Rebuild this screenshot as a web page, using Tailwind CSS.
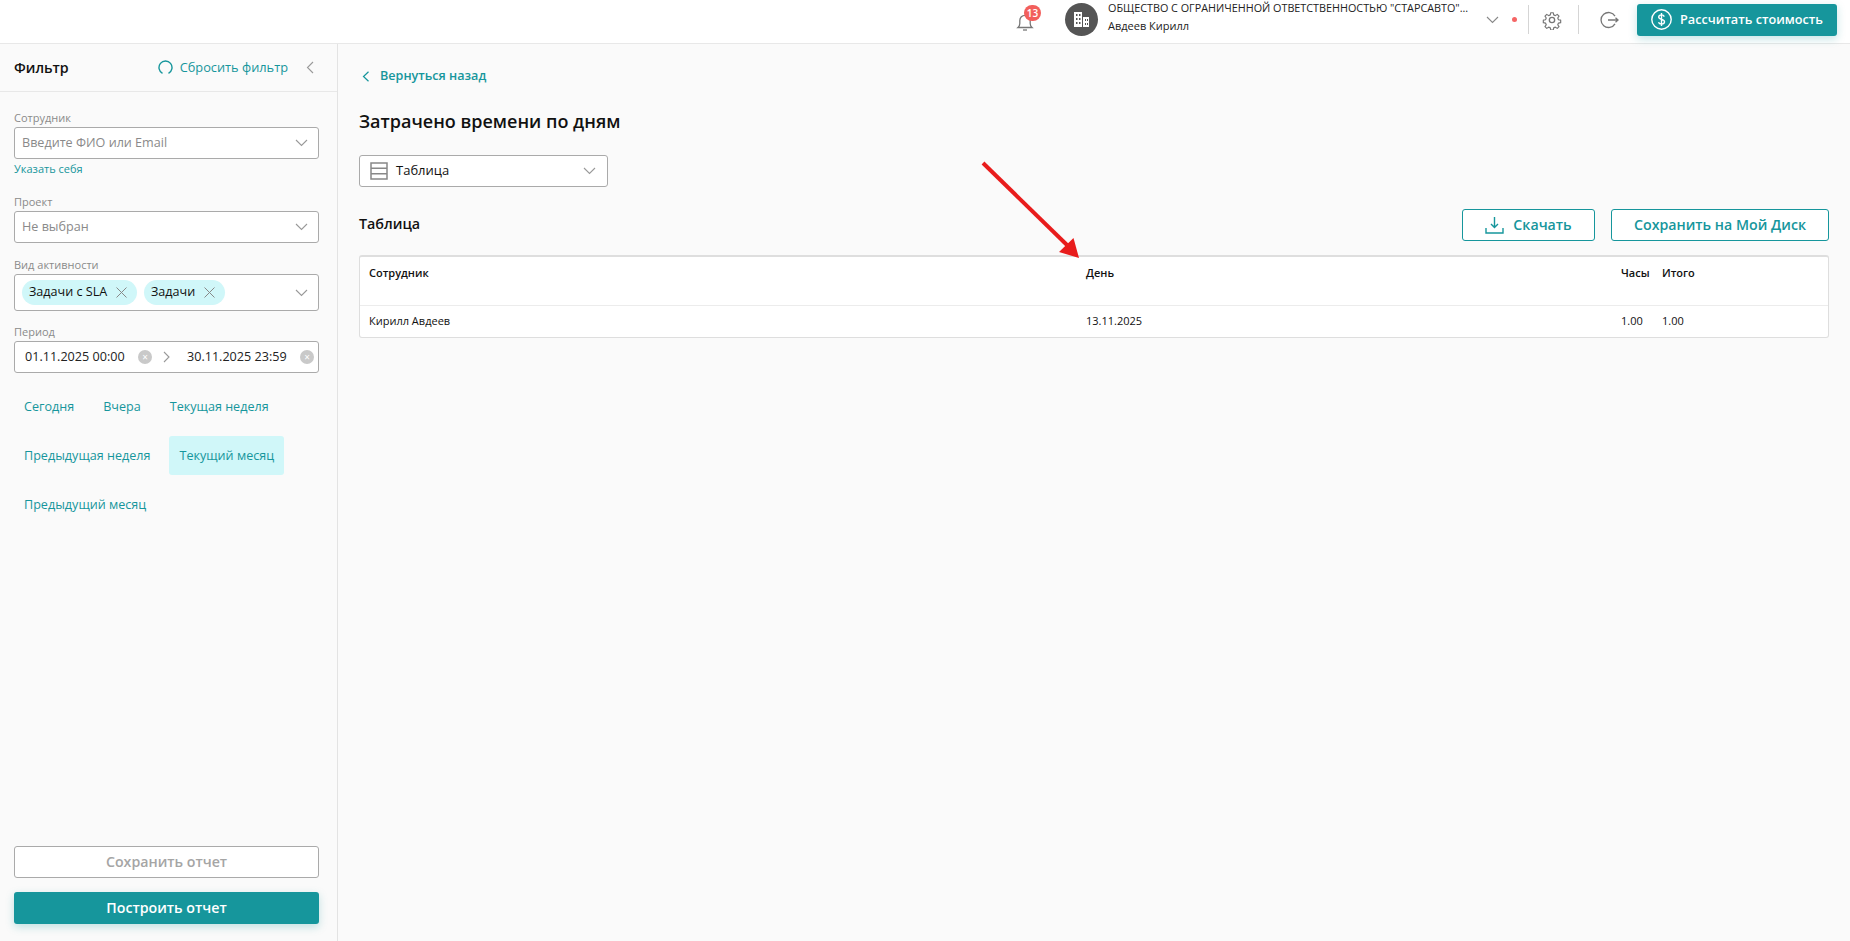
<!DOCTYPE html>
<html lang="ru">
<head>
  <meta charset="UTF-8" />
  <title>Затрачено времени по дням</title>
  <script src="https://cdn.jsdelivr.net/npm/@tailwindcss/browser@4"></script>
</head>
<body class="h-[941px] w-[1850px] overflow-hidden bg-[#fafafa] font-['Open_Sans',sans-serif] text-[12.6px] text-[#111]">
  <!-- Header -->
  <header class="flex h-[44px] items-center border-b border-[#e8e8e8] bg-white pb-[4px] pr-[13px]">
    <div class="relative ml-[1016px] h-[24px] w-[18px] shrink-0">
      <svg class="absolute left-0 top-[4px]" width="18" height="20" viewBox="0 0 18 20" fill="none" stroke="#777" stroke-width="1.3"><path d="M2 15.5c1.2-1 1.8-2 1.8-4V8.5a5.2 5.2 0 0 1 10.4 0v3c0 2 .6 3 1.8 4z"/><path d="M7 18h4"/></svg>
      <span class="absolute left-[8px] top-[-3px] flex h-[16px] w-[17px] items-center justify-center rounded-full bg-[#f25f5c] text-[10px] font-semibold leading-none text-white">13</span>
    </div>
    <div class="ml-[31px] flex h-[33px] w-[33px] shrink-0 items-center justify-center rounded-full bg-[#555]">
      <svg width="17" height="17" viewBox="0 0 17 17" fill="#fff"><path d="M1 1h8v15H1zM10 6h6v10h-6z"/><path fill="#555" d="M3 3h1.500v2H3zM6 3h1.500v2H6zM3 7h1.500v2H3zM6 7h1.500v2H6zM3 11h1.500v2H3zM6 11h1.500v2H6zM12 8h1v2h-1zM14 8h1v2h-1zM12 12h1v2h-1zM14 12h1v2h-1z"/></svg>
    </div>
    <div class="mb-[6px] ml-[10px] w-[368px] shrink-0 text-[11px] leading-[18px] text-[#222]">
      <div class="truncate whitespace-nowrap text-[10.800px]">ОБЩЕСТВО С ОГРАНИЧЕННОЙ ОТВЕТСТВЕННОСТЬЮ "СТАРСАВТО"...</div>
      <div>Авдеев Кирилл</div>
    </div>
    <svg class="ml-[10px] shrink-0" width="13" height="8" viewBox="0 0 13 8" fill="none" stroke="#888" stroke-width="1.100"><path d="M1 1l5.500 5.500L12 1"/></svg>
    <span class="ml-[13px] h-[5px] w-[5px] shrink-0 rounded-full bg-[#f56565]"></span>
    <span class="ml-[11px] h-[29px] w-px shrink-0 bg-[#d5d5d5]"></span>
    <svg class="ml-[13px] shrink-0" width="20" height="20" viewBox="0 0 24 24" fill="none" stroke="#777" stroke-width="1.600" stroke-linejoin="round"><circle cx="12" cy="12" r="3.200"/><path d="M10.300 2h3.400l.6 3 2.300 1 2.600-1.700 2.400 2.400-1.700 2.600 1 2.300 3 .6v3.400l-3 .6-1 2.300 1.700 2.600-2.400 2.400-2.600-1.700-2.300 1-.6 3h-3.400l-.6-3-2.300-1-2.600 1.700-2.400-2.400 1.700-2.600-1-2.300-3-.6v-3.400l3-.6 1-2.300-1.700-2.600 2.400-2.400 2.600 1.700 2.300-1z" transform="translate(1.500 1.500) scale(.875)"/></svg>
    <span class="ml-[16px] h-[29px] w-px shrink-0 bg-[#d5d5d5]"></span>
    <svg class="ml-[21px] shrink-0" width="19" height="18" viewBox="0 0 19 18" fill="none" stroke="#777" stroke-width="1.300"><path d="M15 5.200A7.500 7.500 0 1 0 15 12.800"/><path d="M8 9h10M15.500 6.800L18 9l-2.500 2.200" /></svg>
    <button class="ml-[18px] flex h-[32px] w-[200px] shrink-0 items-center rounded-[3px] bg-[#16969c] pl-[14px] text-[12.700px] font-semibold text-white shadow-[0_3px_8px_rgba(22,150,156,0.25)]">
      <svg width="21" height="21" viewBox="0 0 21 21" fill="none" stroke="#fff" stroke-width="1.400"><circle cx="10.500" cy="10.500" r="9.700"/><path d="M13.300 7.600c-.5-1.100-1.500-1.700-2.800-1.700-1.600 0-2.800.9-2.800 2.200 0 3 5.800 1.600 5.800 4.700 0 1.400-1.300 2.300-3 2.300-1.400 0-2.600-.7-3-1.900M10.500 4v13"/></svg>
      <span class="ml-[8px] whitespace-nowrap">Рассчитать стоимость</span>
    </button>
  </header>

  <div class="flex h-[897px]">
    <!-- Filter sidebar -->
    <aside class="flex w-[338px] shrink-0 flex-col border-r border-[#e3e3e3] bg-[#fafafa]">
      <div class="flex h-[48px] shrink-0 items-center border-b border-[#e8e8e8] pl-[14px] pr-[23px]">
        <span class="text-[14.200px] font-semibold">Фильтр</span>
        <svg class="ml-auto" width="15" height="15" viewBox="0 0 15 15" fill="none" stroke="#16969c" stroke-width="1.400"><path d="M4.500 13.300A6.500 6.500 0 1 1 10.500 13.300"/></svg>
        <span class="ml-[7px] whitespace-nowrap text-[12.800px] text-[#16969c]">Сбросить фильтр</span>
        <svg class="ml-[18px]" width="8" height="13" viewBox="0 0 8 13" fill="none" stroke="#999" stroke-width="1.100"><path d="M7 1L1.500 6.500 7 12"/></svg>
      </div>

      <div class="flex flex-1 flex-col pl-[14px] pr-[18px]">
        <div class="mt-[17px] text-[11px] leading-[18px] text-[#8a8a8a]">Сотрудник</div>
        <div class="flex h-[32px] items-center justify-between rounded-[3px] border border-[#aaa] bg-white pl-[7px] pr-[10px] text-[#8a8a8a]">
          Введите ФИО или Email
          <svg width="13" height="8" viewBox="0 0 13 8" fill="none" stroke="#999" stroke-width="1.100"><path d="M1 1l5.500 5.500L12 1"/></svg>
        </div>
        <div class="mt-[2px] text-[11px] leading-[16px] text-[#16969c]">Указать себя</div>

        <div class="mt-[16px] text-[11px] leading-[18px] text-[#8a8a8a]">Проект</div>
        <div class="flex h-[32px] items-center justify-between rounded-[3px] border border-[#aaa] bg-white pl-[7px] pr-[10px] text-[#8a8a8a]">
          Не выбран
          <svg width="13" height="8" viewBox="0 0 13 8" fill="none" stroke="#999" stroke-width="1.100"><path d="M1 1l5.500 5.500L12 1"/></svg>
        </div>

        <div class="mt-[13px] text-[11px] leading-[18px] text-[#8a8a8a]">Вид активности</div>
        <div class="flex h-[37px] items-center rounded-[3px] border border-[#aaa] bg-white pl-[7px] pr-[10px]">
          <span class="flex h-[25px] w-[115px] shrink-0 items-center justify-between rounded-full bg-[#d0f7f9] pl-[7px] pr-[10px]">
            Задачи с SLA
            <svg width="11" height="11" viewBox="0 0 11 11" fill="none" stroke="#888"><path d="M.5.500l10 10M10.500.500l-10 10"/></svg>
          </span>
          <span class="ml-[7px] flex h-[25px] w-[81px] shrink-0 items-center justify-between rounded-full bg-[#d0f7f9] pl-[7px] pr-[10px]">
            Задачи
            <svg width="11" height="11" viewBox="0 0 11 11" fill="none" stroke="#888"><path d="M.5.500l10 10M10.500.500l-10 10"/></svg>
          </span>
          <svg class="ml-auto" width="13" height="8" viewBox="0 0 13 8" fill="none" stroke="#999" stroke-width="1.100"><path d="M1 1l5.500 5.500L12 1"/></svg>
        </div>

        <div class="mt-[12px] text-[11px] leading-[18px] text-[#8a8a8a]">Период</div>
        <div class="flex h-[32px] items-center rounded-[3px] border border-[#aaa] bg-white pl-[10px] text-[#222]">
          <span class="w-[99px] whitespace-nowrap">01.11.2025 00:00</span>
          <span class="ml-[14px] flex h-[14px] w-[14px] items-center justify-center rounded-full bg-[#c9c9c9] text-[10px] leading-none text-white">×</span>
          <svg class="ml-[11px]" width="7" height="12" viewBox="0 0 7 12" fill="none" stroke="#999" stroke-width="1.100"><path d="M1 1l5 5-5 5"/></svg>
          <span class="ml-[17px] w-[99px] whitespace-nowrap">30.11.2025 23:59</span>
          <span class="ml-[14px] flex h-[14px] w-[14px] items-center justify-center rounded-full bg-[#c9c9c9] text-[10px] leading-none text-white">×</span>
        </div>

        <div class="mt-[14px] flex flex-wrap gap-x-[9px] gap-y-[10px] text-[#16969c]">
          <span class="rounded-[3px] px-[10px] leading-[39px]">Сегодня</span>
          <span class="rounded-[3px] px-[10px] leading-[39px]">Вчера</span>
          <span class="rounded-[3px] px-[10px] leading-[39px]">Текущая неделя</span>
          <span class="rounded-[3px] px-[10px] leading-[39px]">Предыдущая неделя</span>
          <span class="rounded-[3px] bg-[#d0f7f9] px-[10px] leading-[39px]">Текущий месяц</span>
          <span class="rounded-[3px] px-[10px] leading-[39px]">Предыдущий месяц</span>
        </div>

        <button class="mt-auto h-[32px] rounded-[3px] border border-[#aaa] bg-white text-[14.200px] font-semibold text-[#a5a5a5]">Сохранить отчет</button>
        <button class="mb-[17px] mt-[14px] h-[32px] rounded-[3px] bg-[#16969c] text-[14.200px] font-semibold text-white shadow-[0_3px_8px_rgba(22,150,156,0.25)]">Построить отчет</button>
      </div>
    </aside>

    <!-- Main -->
    <main class="relative flex-1 pl-[21px] pr-[21px]">
      <div class="mt-[24px] flex h-[16px] items-center font-semibold text-[#16969c]">
        <svg class="ml-[3px]" width="8" height="11" viewBox="0 0 8 11" fill="none" stroke="#16969c" stroke-width="1.200"><path d="M6.500.800L1.500 5.500l5 4.700"/></svg>
        <span class="ml-[10px]">Вернуться назад</span>
      </div>
      <h1 class="mt-[24px] text-[18px] font-semibold leading-[26px]">Затрачено времени по дням</h1>
      <div class="mt-[21px] flex h-[32px] w-[249px] items-center rounded-[3px] border border-[#aaa] bg-white pl-[10px] pr-[11px] text-[13px]">
        <svg width="18" height="18" viewBox="0 0 18 18" fill="none" stroke="#888" stroke-width="1.500"><path d="M1 1h16v16H1zM1 6.300h16M1 11.700h16"/></svg>
        <span class="ml-[8px]">Таблица</span>
        <svg class="ml-auto" width="13" height="8" viewBox="0 0 13 8" fill="none" stroke="#999" stroke-width="1.100"><path d="M1 1l5.500 5.500L12 1"/></svg>
      </div>

      <div class="mt-[22px] flex h-[32px] items-center justify-between">
        <h2 class="mb-[2px] text-[14.300px] font-semibold">Таблица</h2>
        <div class="flex gap-[16px] text-[14.200px] font-semibold text-[#16969c]">
          <button class="flex h-[32px] w-[133px] items-center justify-center rounded-[3px] border border-[#16969c] bg-white">
            <svg width="19" height="18" viewBox="0 0 19 18" fill="none" stroke="#16969c" stroke-width="1.400"><path d="M9.500 1v10M6 8l3.500 3.500L13 8M1 12v5h17v-5"/></svg>
            <span class="ml-[9px]">Скачать</span>
          </button>
          <button class="h-[32px] w-[218px] rounded-[3px] border border-[#16969c] bg-white">Сохранить на Мой Диск</button>
        </div>
      </div>

      <div class="mt-[14px] h-[83px] rounded-[3px] border border-t-2 border-[#dedede] bg-white text-[11px]">
        <div class="grid h-[49px] grid-cols-[717px_535px_41px_1fr] border-b border-[#ececec] pl-[9px] pt-[8px] font-semibold">
          <span>Сотрудник</span><span>День</span><span>Часы</span><span>Итого</span>
        </div>
        <div class="grid h-[31px] grid-cols-[717px_535px_41px_1fr] items-center pl-[9px]">
          <span>Кирилл Авдеев</span><span>13.11.2025</span><span>1.00</span><span>1.00</span>
        </div>
      </div>

      <!-- Red annotation arrow -->
      <svg class="absolute left-[-338px] top-[-44px]" width="1850" height="941" viewBox="0 0 1850 941" fill="none">
        <path d="M983 163L1067 245" stroke="#e81c1c" stroke-width="4"/>
        <path d="M1079 258L1059 252L1073.500 238Z" fill="#e81c1c"/>
      </svg>
    </main>
  </div>
</body>
</html>
